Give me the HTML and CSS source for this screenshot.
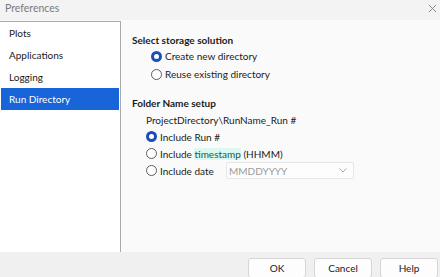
FILE: index.html
```html
<!DOCTYPE html>
<html lang="en">
<head>
    <meta charset="UTF-8">
    <meta name="viewport" content="width=device-width, initial-scale=1.0">
    <title>Preferences</title>
    <link rel="stylesheet" href="styles.css">
</head>
<body>
    <div class="window">
        <div class="titlebar">
            <span class="title">Preferences</span>
            <svg class="close" width="9" height="9" viewBox="0 0 9 9">
                <path d="M1 1 L8 8 M8 1 L1 8" stroke="#8a8a8a" stroke-width="1" fill="none"/>
            </svg>
        </div>

        <div class="main">
            <ul class="nav">
                <li>Plots</li>
                <li>Applications</li>
                <li>Logging</li>
                <li class="active">Run Directory</li>
            </ul>

            <div class="panel">
                <h2 class="section">Select storage solution</h2>
                <div class="options storage">
                    <label class="radio checked"><span class="dot"></span>Create new directory</label>
                    <label class="radio"><span class="dot"></span>Reuse existing directory</label>
                </div>

                <h2 class="section second">Folder Name setup</h2>
                <div class="options folder">
                    <div class="path">ProjectDirectory\RunName_Run #</div>
                    <label class="radio checked"><span class="dot"></span>Include Run #</label>
                    <label class="radio"><span class="dot"></span>Include&nbsp;<span class="mark">timestamp</span>&nbsp;(HHMM)</label>
                    <div class="date-row">
                        <label class="radio date-label"><span class="dot"></span>Include date</label>
                        <div class="combo">
                            <span>MMDDYYYY</span>
                            <svg width="8" height="5" viewBox="0 0 8 5">
                                <path d="M0.5 0.5 L4 4 L7.5 0.5" stroke="#a8a8a8" stroke-width="1" fill="none"/>
                            </svg>
                        </div>
                    </div>
                </div>
            </div>
        </div>

        <div class="footer">
            <button>OK</button>
            <button>Cancel</button>
            <button>Help</button>
        </div>
    </div>
</body>
</html>
```

FILE: styles.css
```css
/* Base */
body {
    margin: 0;
    padding: 0;
    font-family: Lato, "Noto Sans", sans-serif;
    font-size: 10px;
    color: #1a1a1a;
    background-color: #f0f0f0;
}

.window {
    width: 440px;
    height: 277px;
    display: flex;
    flex-direction: column;
    overflow: hidden;
}

/* Title bar */
.titlebar {
    height: 20px;
    flex: none;
    display: flex;
    align-items: center;
    justify-content: space-between;
    padding: 0 3px 4px 5px;
    box-sizing: border-box;
    background-color: #f3f3f3;
}

.title {
    font-size: 10.5px;
    color: #7a7a7a;
}

/* Main area */
.main {
    flex: 1;
    display: flex;
    background-color: #fafafa;
}

.nav {
    list-style: none;
    margin: 1px 0 0 0;
    padding: 0 1px;
    width: 118px;
    flex: none;
    background-color: #ffffff;
    border: 1px solid #a9a9a9;
    border-left: none;
    border-bottom: none;
}

.nav li {
    height: 22px;
    line-height: 22px;
    padding-left: 8px;
    color: #1a1a1a;
}

.nav li.active {
    background-color: #1765d8;
    color: #ffffff;
}

/* Panel */
.panel {
    flex: 1;
    padding: 13px 0 0 11px;
}

.section {
    margin: 0;
    font-size: 10px;
    font-weight: bold;
    line-height: 14px;
}

.section.second {
    margin-top: 13px;
}

.options {
    display: flex;
    flex-direction: column;
}

.storage {
    padding-left: 19px;
}

.storage .radio {
    height: 18px;
}

.folder {
    padding-left: 14px;
}

.folder .path {
    margin-top: 3px;
    line-height: 14px;
    height: 15px;
}

.folder .radio {
    height: 17px;
}

.radio {
    display: flex;
    align-items: center;
}

.dot {
    width: 9px;
    height: 9px;
    margin-right: 3px;
    border-radius: 50%;
    border: 1px solid #5c5c5c;
    background-color: #ffffff;
    flex: none;
}

.radio.checked .dot {
    width: 5px;
    height: 5px;
    border: 3px solid #1b4fb8;
}

/* highlighted word */
.mark {
    background-color: #dcf8ef;
    color: #1f5a4c;
}

.date-row {
    display: flex;
    align-items: center;
}

.date-label {
    width: 80px;
}

.combo {
    width: 128px;
    height: 17px;
    box-sizing: border-box;
    border: 1px solid #e6e6e6;
    border-radius: 2px;
    background-color: #fdfdfd;
    display: flex;
    align-items: center;
    justify-content: space-between;
    padding: 0 6px 0 2px;
    color: #9a9a9a;
}

/* Footer */
.footer {
    height: 25px;
    flex: none;
    display: flex;
    justify-content: flex-end;
    align-items: flex-start;
    gap: 8px;
    padding: 6px 2px 0 0;
    box-sizing: border-box;
    background-color: #f0f0f0;
}

.footer button {
    width: 58px;
    height: 20px;
    font-family: Lato, "Noto Sans", sans-serif;
    font-size: 10px;
    color: #1a1a1a;
    background-color: #fdfdfd;
    border: 1px solid #d6d6d6;
    border-radius: 3px;
    padding: 0;
}
```
